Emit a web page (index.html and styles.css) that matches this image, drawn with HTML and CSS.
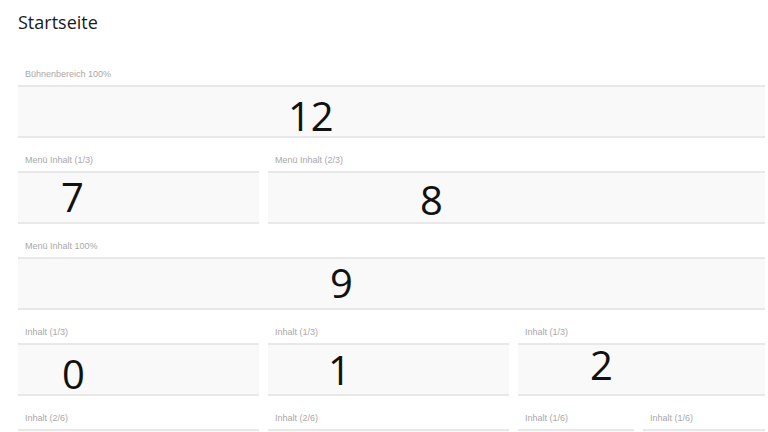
FILE: index.html
```html
<!DOCTYPE html>
<html lang="de">
<head>
  <meta charset="UTF-8">
  <title>Startseite</title>
  <meta name="viewport" content="width=device-width, initial-scale=1.0">
  <link rel="stylesheet" href="styles.css">
</head>
<body>

  <h1 class="page-title">Startseite</h1>

  <div class="layout-grid">
    <div class="slot span-6">
      <div class="slot-label">Bühnenbereich 100%</div>
      <div class="slot-body"><span class="num num-12">12</span></div>
    </div>

    <div class="slot span-2">
      <div class="slot-label">Menü Inhalt (1/3)</div>
      <div class="slot-body"><span class="num num-7">7</span></div>
    </div>
    <div class="slot span-4">
      <div class="slot-label">Menü Inhalt (2/3)</div>
      <div class="slot-body"><span class="num num-8">8</span></div>
    </div>

    <div class="slot span-6">
      <div class="slot-label">Menü Inhalt 100%</div>
      <div class="slot-body"><span class="num num-9">9</span></div>
    </div>

    <div class="slot span-2">
      <div class="slot-label">Inhalt (1/3)</div>
      <div class="slot-body"><span class="num num-0">0</span></div>
    </div>
    <div class="slot span-2">
      <div class="slot-label">Inhalt (1/3)</div>
      <div class="slot-body"><span class="num num-1">1</span></div>
    </div>
    <div class="slot span-2">
      <div class="slot-label">Inhalt (1/3)</div>
      <div class="slot-body"><span class="num num-2">2</span></div>
    </div>

    <div class="slot span-2">
      <div class="slot-label">Inhalt (2/6)</div>
      <div class="slot-body"></div>
    </div>
    <div class="slot span-2">
      <div class="slot-label">Inhalt (2/6)</div>
      <div class="slot-body"></div>
    </div>
    <div class="slot span-1">
      <div class="slot-label">Inhalt (1/6)</div>
      <div class="slot-body"></div>
    </div>
    <div class="slot span-1">
      <div class="slot-label">Inhalt (1/6)</div>
      <div class="slot-body"></div>
    </div>
  </div>

</body>
</html>
```

FILE: styles.css
```css
html, body {
  margin: 0;
  background: #fff;
}
body {
  padding: 0 3px 0 18px;
  font-family: 'Open Sans', sans-serif;
  color: #222;
  overflow: hidden;
}
.page-title {
  margin: 10px 0 29px;
  font-size: 18px;
  line-height: 24px;
  font-weight: 400;
  color: #1a1a1a;
}
.layout-grid {
  display: grid;
  grid-template-columns: repeat(5, 116px) 1fr;
  column-gap: 9px;
  row-gap: 11px;
}
.span-6 { grid-column: span 6; }
.span-4 { grid-column: span 4; }
.span-2 { grid-column: span 2; }
.span-1 { grid-column: span 1; }
.slot-label {
  height: 22px;
  line-height: 22px;
  padding-left: 7px;
  font-family: 'Liberation Sans', Arial, sans-serif;
  font-size: 9px;
  color: #a8a8a8;
  white-space: nowrap;
}
.slot-body {
  height: 53px;
  box-sizing: border-box;
  background: #f9f9f9;
  border-top: 2px solid #e8e8e8;
  border-bottom: 2px solid #e8e8e8;
}
.num {
  display: block;
  width: max-content;
  font-size: 40px;
  line-height: 40px;
  color: #111;
}
.num-12 { margin: 9px 0 0 270px; }
.num-7 { margin: 4px 0 0 43px; }
.num-8 { margin: 7px 0 0 152px; }
.num-9 { margin: 4px 0 0 312px; }
.num-0 { margin: 9px 0 0 44px; }
.num-1 { margin: 5px 0 0 60px; }
.num-2 { margin: 0 0 0 72px; }
```
